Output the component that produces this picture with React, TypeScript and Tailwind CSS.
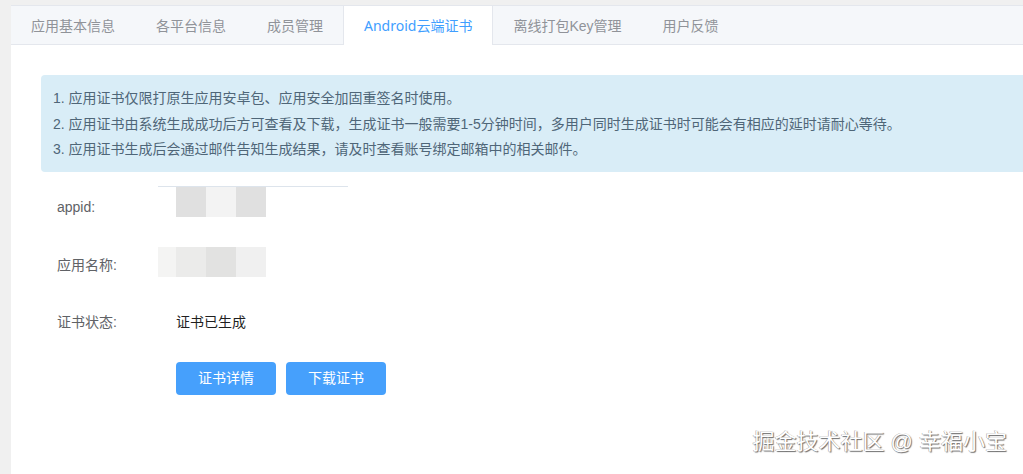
import React from "react";

const tabs = ["应用基本信息", "各平台信息", "成员管理", "Android云端证书", "离线打包Key管理", "用户反馈"];
const active = 3;

const notes = [
  "1. 应用证书仅限打原生应用安卓包、应用安全加固重签名时使用。",
  "2. 应用证书由系统生成成功后方可查看及下载，生成证书一般需要1-5分钟时间，多用户同时生成证书时可能会有相应的延时请耐心等待。",
  "3. 应用证书生成后会通过邮件告知生成结果，请及时查看账号绑定邮箱中的相关邮件。",
];

export default function App() {
  return (
    <div
      className="relative h-[474px] w-[1023px] overflow-hidden bg-[#f0f0f0] pl-[11px] pt-[5px]"
      style={{ fontFamily: '"Liberation Sans", "Noto Sans CJK SC", sans-serif' }}
    >
      <div className="h-full w-[1040px] bg-white">
        {/* tab header */}
        <div className="flex h-[40px] border-y border-[#e4e7ed] bg-[#f5f7fa]">
          {tabs.map((t, i) => (
            <div
              key={t}
              className={
                i === active
                  ? "-mb-px h-[39px] border-x border-[#e4e7ed] bg-white px-5 pt-px text-[14px] leading-[38px] text-[#409eff] [font-family:'Noto_Sans','Noto_Sans_CJK_SC',sans-serif]"
                  : `h-[38px] px-5 pt-px text-[14px] leading-[38px] text-[#909399] ${i === 0 || i === active + 1 ? "" : "border-l border-transparent"}`
              }
            >
              {t}
            </div>
          ))}
        </div>

        <div className="pl-[30px] pt-[30px]">
          {/* info alert */}
          <div className="rounded-[4px] bg-[#d9edf7] pb-[9px] pl-[12px] pt-[11px] text-[14px] leading-[25.5px] text-[#4f6678]">
            {notes.map((n) => (
              <div key={n}>{n}</div>
            ))}
          </div>

          {/* form */}
          <div className="ml-[16px] mt-[14px] text-[14px]">
            <div className="flex h-[42px]">
              <div className="w-[119px] leading-[42px] text-[#606266]">appid:</div>
              <div className="relative">
                <div className="absolute -left-[18px] top-0 h-px w-[190px] bg-[#dde4ec]" />
                <div className="flex">
                  <div className="h-[31px] w-[30px] bg-[#e0e0e0]" />
                  <div className="h-[31px] w-[30px] bg-[#f3f3f3]" />
                  <div className="h-[31px] w-[30px] bg-[#e0e0e0]" />
                </div>
              </div>
            </div>

            <div className="mt-[16px] flex h-[42px]">
              <div className="w-[119px] leading-[42px] text-[#606266]">应用名称:</div>
              <div className="-ml-[18px] mt-[3px] flex">
                <div className="h-[30px] w-[18px] bg-[#f4f4f3]" />
                <div className="h-[30px] w-[30px] bg-[#ebebea]" />
                <div className="h-[30px] w-[30px] bg-[#e2e2e1]" />
                <div className="h-[30px] w-[30px] bg-[#f0f0f0]" />
              </div>
            </div>

            <div className="mt-[15px] flex h-[42px] leading-[42px]">
              <div className="w-[119px] text-[#606266]">证书状态:</div>
              <div className="text-[#1f1f1f]">证书已生成</div>
            </div>

            <div className="ml-[119px] mt-[19px] flex gap-[10px]">
              <button className="h-[33px] w-[100px] rounded-[4px] bg-[#46a0fc] text-[14px] text-white">证书详情</button>
              <button className="h-[33px] w-[100px] rounded-[4px] bg-[#46a0fc] text-[14px] text-white">下载证书</button>
            </div>
          </div>
        </div>
      </div>

      {/* watermark */}
      <div
        className="absolute right-[16px] top-[428px] text-[22px] leading-[28px] text-white"
        style={{ textShadow: "1px 1px 1px #6b6b6b, -0.5px -0.5px 0.5px #9a9a9a" }}
      >
        掘金技术社区 @ 幸福小宝
      </div>
    </div>
  );
}
